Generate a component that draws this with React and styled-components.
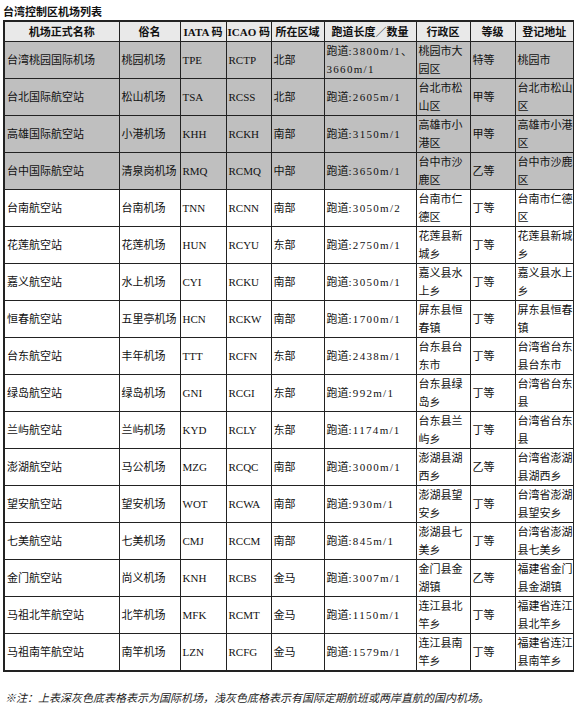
import React from "react";
import styled, { createGlobalStyle } from "styled-components";

// [正式名称, 俗名, IATA, ICAO, 区域, 跑道(数组), 行政区, 等级, 登记地址, 国际机场]
const airports = [
  ["台湾桃园国际机场", "桃园机场", "TPE", "RCTP", "北部", ["3800m/1", "3660m/1"], "桃园市大\n园区", "特等", "桃园市", true],
  ["台北国际航空站", "松山机场", "TSA", "RCSS", "北部", ["2605m/1"], "台北市松\n山区", "甲等", "台北市松山\n区", true],
  ["高雄国际航空站", "小港机场", "KHH", "RCKH", "南部", ["3150m/1"], "高雄市小\n港区", "甲等", "高雄市小港\n区", true],
  ["台中国际航空站", "清泉岗机场", "RMQ", "RCMQ", "中部", ["3650m/1"], "台中市沙\n鹿区", "乙等", "台中市沙鹿\n区", true],
  ["台南航空站", "台南机场", "TNN", "RCNN", "南部", ["3050m/2"], "台南市仁\n德区", "丁等", "台南市仁德\n区"],
  ["花莲航空站", "花莲机场", "HUN", "RCYU", "东部", ["2750m/1"], "花莲县新\n城乡", "丁等", "花莲县新城\n乡"],
  ["嘉义航空站", "水上机场", "CYI", "RCKU", "南部", ["3050m/1"], "嘉义县水\n上乡", "丁等", "嘉义县水上\n乡"],
  ["恒春航空站", "五里亭机场", "HCN", "RCKW", "南部", ["1700m/1"], "屏东县恒\n春镇", "丁等", "屏东县恒春\n镇"],
  ["台东航空站", "丰年机场", "TTT", "RCFN", "东部", ["2438m/1"], "台东县台\n东市", "丁等", "台湾省台东\n县台东市"],
  ["绿岛航空站", "绿岛机场", "GNI", "RCGI", "东部", ["992m/1"], "台东县绿\n岛乡", "丁等", "台湾省台东\n县"],
  ["兰屿航空站", "兰屿机场", "KYD", "RCLY", "东部", ["1174m/1"], "台东县兰\n屿乡", "丁等", "台湾省台东\n县"],
  ["澎湖航空站", "马公机场", "MZG", "RCQC", "南部", ["3000m/1"], "澎湖县湖\n西乡", "乙等", "台湾省澎湖\n县湖西乡"],
  ["望安航空站", "望安机场", "WOT", "RCWA", "南部", ["930m/1"], "澎湖县望\n安乡", "丁等", "台湾省澎湖\n县望安乡"],
  ["七美航空站", "七美机场", "CMJ", "RCCM", "南部", ["845m/1"], "澎湖县七\n美乡", "丁等", "台湾省澎湖\n县七美乡"],
  ["金门航空站", "尚义机场", "KNH", "RCBS", "金马", ["3007m/1"], "金门县金\n湖镇", "乙等", "福建省金门\n县金湖镇"],
  ["马祖北竿航空站", "北竿机场", "MFK", "RCMT", "金马", ["1150m/1"], "连江县北\n竿乡", "丁等", "福建省连江\n县北竿乡"],
  ["马祖南竿航空站", "南竿机场", "LZN", "RCFG", "金马", ["1579m/1"], "连江县南\n竿乡", "丁等", "福建省连江\n县南竿乡"],
];

const headers = ["机场正式名称", "俗名", "IATA 码", "ICAO 码", "所在区域", "跑道长度／数量", "行政区", "等级", "登记地址"];
const widths = [115, 61, 46, 45, 53, 92, 54, 45, 59];

const Runway = ({ values }) => {
  const [first, ...rest] = values;
  return (
    <>
      跑道<Num>:{first}</Num>
      {rest.length > 0 && "、"}
      {rest.map((v) => (
        <React.Fragment key={v}>
          <br />
          <Num>{v}</Num>
        </React.Fragment>
      ))}
    </>
  );
};

const App = () => {
  return (
    <Page>
      <GlobalStyle />
      <Title>台湾控制区机场列表</Title>
      <Table>
        <colgroup>
          {widths.map((w, i) => (
            <col key={i} style={{ width: w }} />
          ))}
        </colgroup>
        <thead>
          <tr>
            {headers.map((h) => (
              <Th key={h}>{h}</Th>
            ))}
          </tr>
        </thead>
        <tbody>
          {airports.map((row) => (
            <Row key={row[0]} $intl={row[9]}>
              <Td>{row[0]}</Td>
              <Td>{row[1]}</Td>
              <Td>{row[2]}</Td>
              <Td>{row[3]}</Td>
              <Td>{row[4]}</Td>
              <Td>
                <Runway values={row[5]} />
              </Td>
              <Td>{row[6]}</Td>
              <Td>{row[7]}</Td>
              <Td>{row[8]}</Td>
            </Row>
          ))}
        </tbody>
      </Table>
      <Note>※注：上表深灰色底表格表示为国际机场，浅灰色底格表示有国际定期航班或两岸直航的国内机场。</Note>
    </Page>
  );
};

export default App;

// 스타일

const GlobalStyle = createGlobalStyle`
  body {
    margin: 0;
    background: #ffffff;
    font-family: "Liberation Serif", "Noto Sans CJK SC", serif;
    color: #111111;
  }
`;

const Page = styled.div`
  width: 574px;
  padding: 5px 1px 0 3px;
  box-sizing: border-box;
`;

const Title = styled.div`
  font-size: 11px;
  font-weight: bold;
  line-height: 14px;
  height: 15px;
  color: #111;
`;

const Table = styled.table`
  width: 570px;
  table-layout: fixed;
  border-collapse: collapse;
  border: 2px solid #222;
  font-size: 11px;
`;

const Th = styled.th`
  height: 19px;
  padding: 0 1px;
  background-color: #e9e9e9;
  border: 1px solid #222;
  font-weight: bold;
  line-height: 14px;
  text-align: center;
  white-space: nowrap;
  overflow: hidden;
  color: #111;
`;

const Row = styled.tr`
  background-color: ${(p) => (p.$intl ? "#bfbfbf" : "#ffffff")};
`;

const Td = styled.td`
  height: 36px;
  padding: 0 1px 0 2px;
  border: 1px solid #222;
  line-height: 18px;
  vertical-align: middle;
  text-align: left;
  white-space: pre;
  overflow: hidden;
`;

const Num = styled.span`
  letter-spacing: 1.3px;
`;

const Note = styled.div`
  margin-top: 19px;
  padding-left: 2px;
  font-size: 11px;
  font-style: italic;
  line-height: 14px;
  color: #222;
`;
